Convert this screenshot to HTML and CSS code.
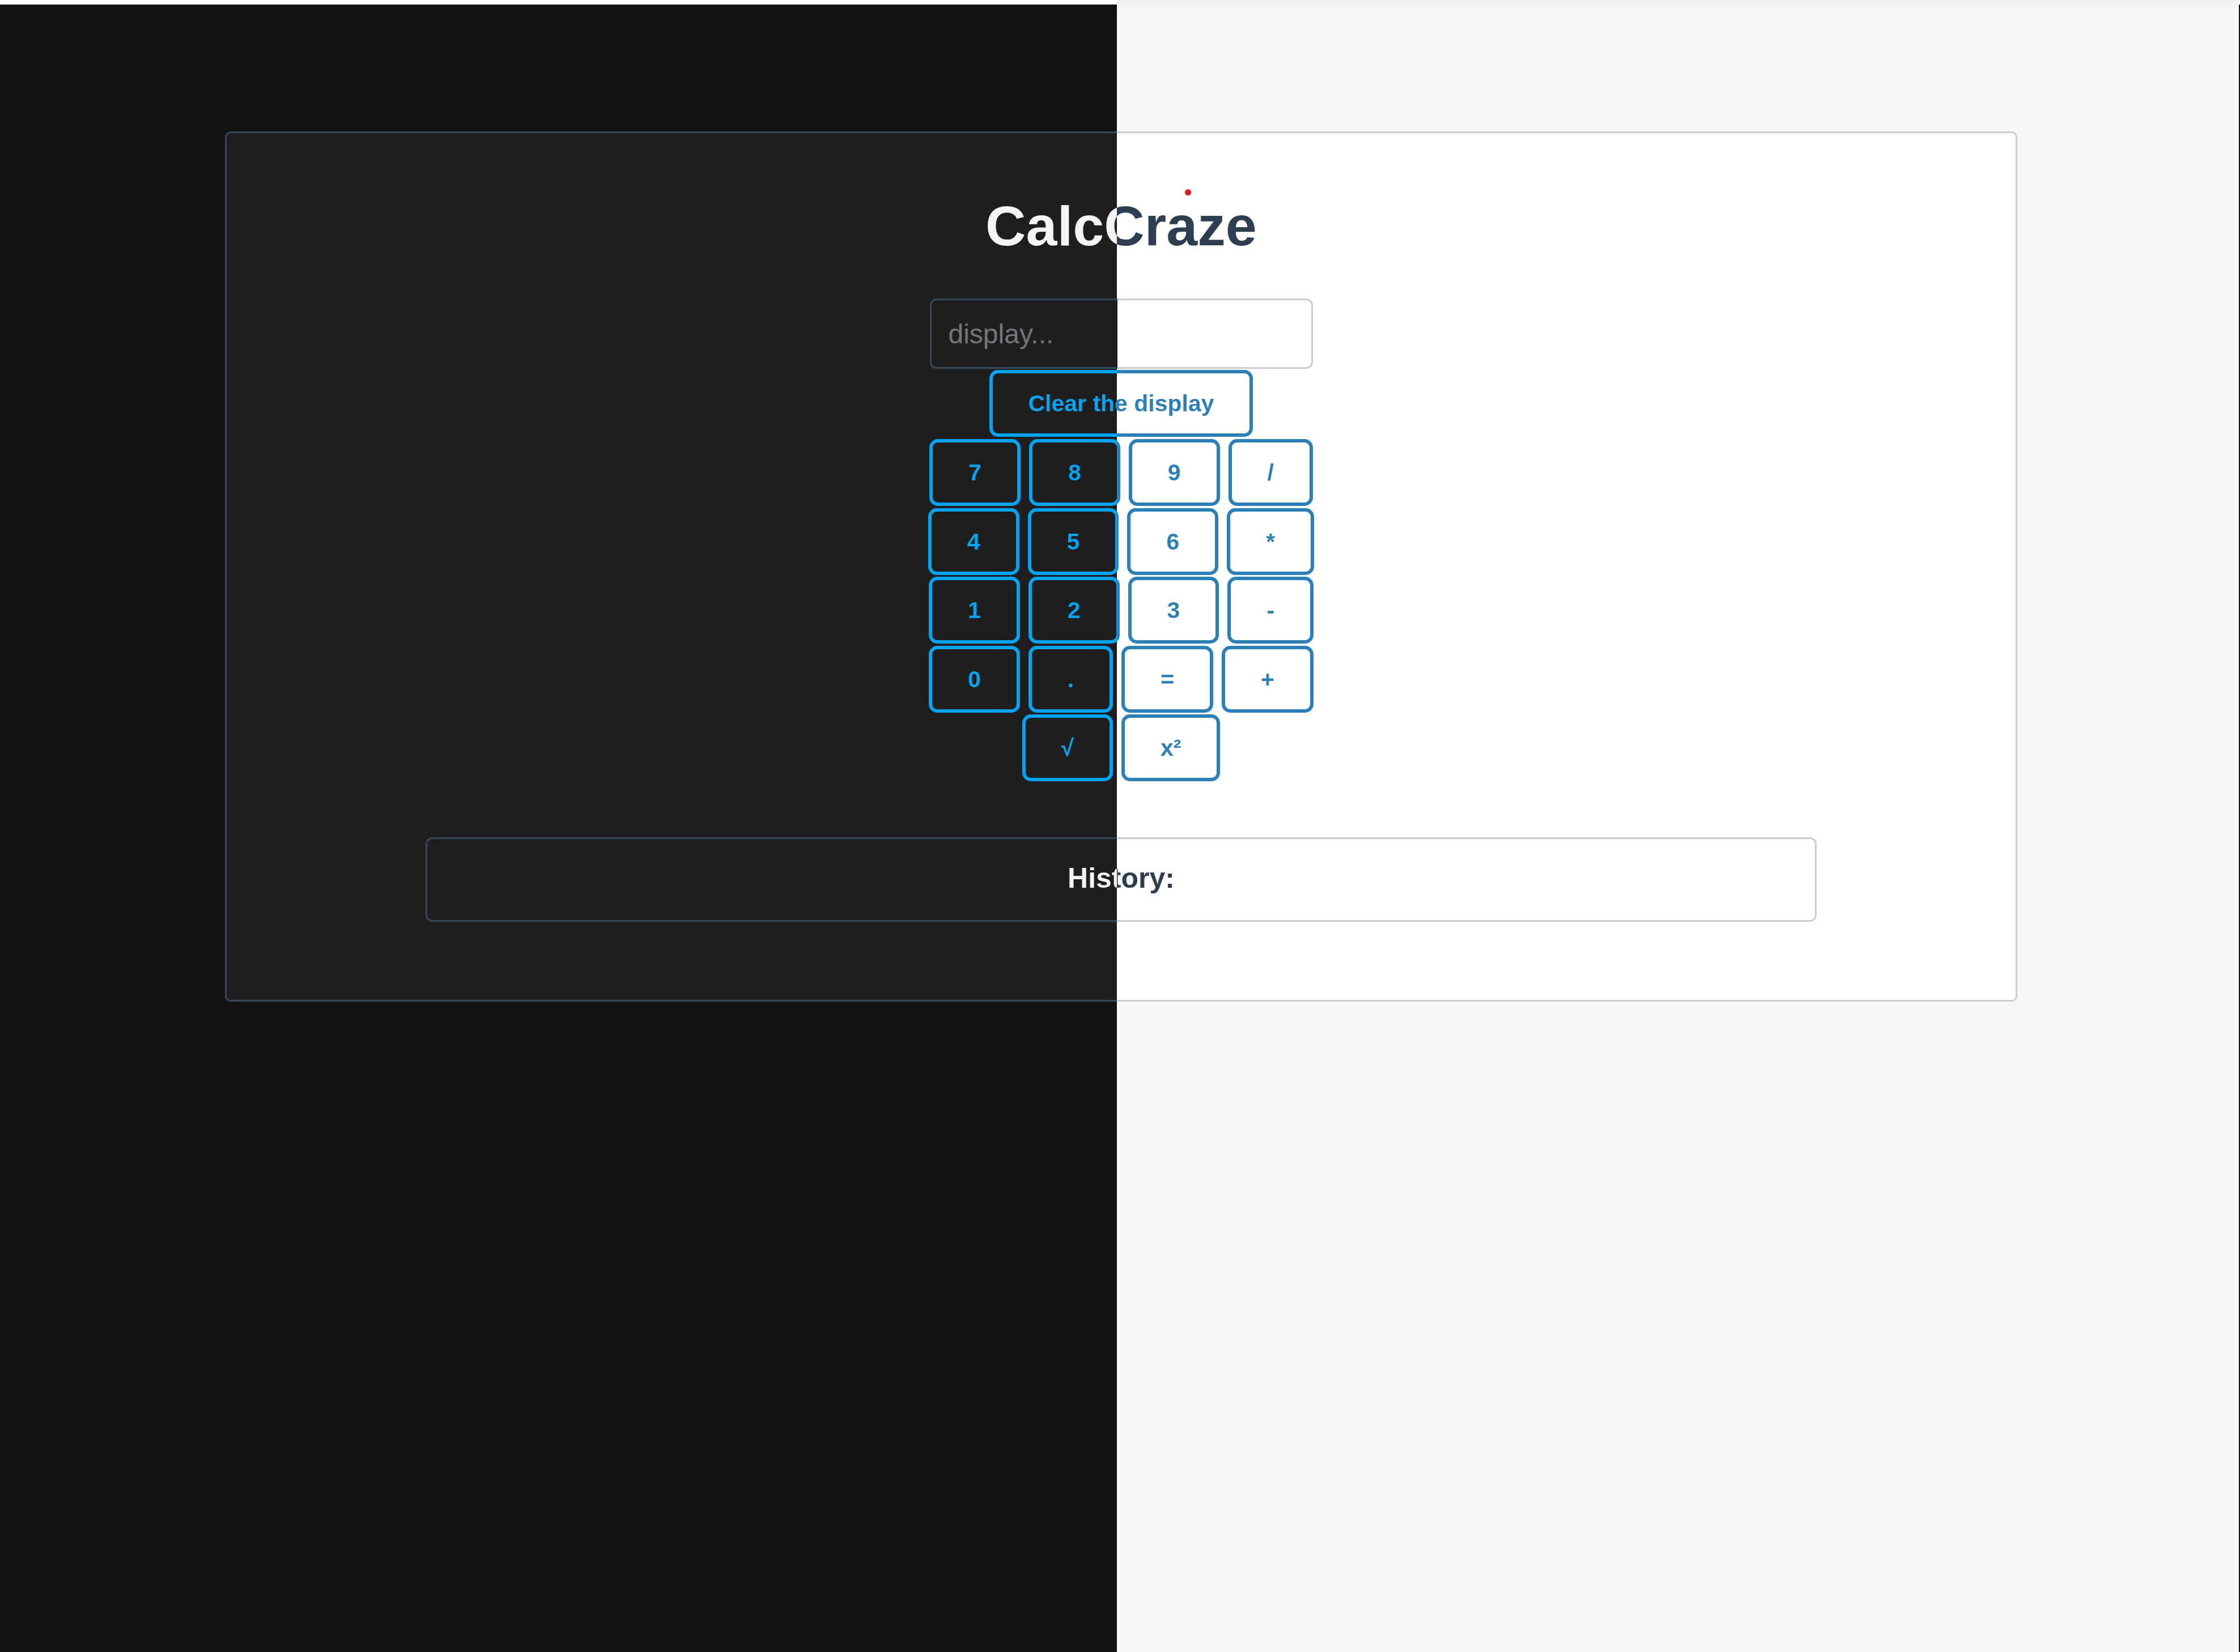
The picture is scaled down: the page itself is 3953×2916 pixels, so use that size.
FILE: index.html
```html
<!DOCTYPE html>
<html lang="en">
<head>
<meta charset="utf-8">
<title>CalcCraze</title>
<link rel="stylesheet" href="styles.css">
</head>
<body>
<div class="page">
  <main class="card">
    <span class="dot"></span>
    <h1 class="title"><span class="ink-title">CalcCraze</span></h1>
    <input class="display" type="text" placeholder="display...">
    <button class="btn btn-clear"><span class="ink-btn">Clear the display</span></button>
    <div class="keys">
      <div class="row">
        <button class="btn"><span class="ink-btn">7</span></button>
        <button class="btn"><span class="ink-btn">8</span></button>
        <button class="btn"><span class="ink-btn">9</span></button>
        <button class="btn"><span class="ink-btn">/</span></button>
      </div>
      <div class="row">
        <button class="btn"><span class="ink-btn">4</span></button>
        <button class="btn"><span class="ink-btn">5</span></button>
        <button class="btn"><span class="ink-btn">6</span></button>
        <button class="btn"><span class="ink-btn">*</span></button>
      </div>
      <div class="row">
        <button class="btn"><span class="ink-btn">1</span></button>
        <button class="btn"><span class="ink-btn">2</span></button>
        <button class="btn"><span class="ink-btn">3</span></button>
        <button class="btn"><span class="ink-btn">-</span></button>
      </div>
      <div class="row">
        <button class="btn"><span class="ink-btn">0</span></button>
        <button class="btn"><span class="ink-btn">.</span></button>
        <button class="btn"><span class="ink-btn">=</span></button>
        <button class="btn"><span class="ink-btn">+</span></button>
      </div>
      <div class="row">
        <button class="btn"><span class="ink-btn">√</span></button>
        <button class="btn"><span class="ink-btn">x²</span></button>
      </div>
    </div>
    <section class="history">
      <h3 class="history-title"><span class="ink-title">History:</span></h3>
    </section>
  </main>
</div>
</body>
</html>
```

FILE: styles.css
```css
html {
  background:
    linear-gradient(#121212, #121212) 3951px 8px / 2px 100% no-repeat fixed,
    linear-gradient(#121212, #121212) 0 8px / 1971px 100% no-repeat fixed,
    linear-gradient(#eeeeee, #f8f8f8 20px) 1971px 0 / 1980px 100% no-repeat fixed,
    #ffffff;
  min-height: 100%;
}

body {
  margin: 0;
  font-family: "Liberation Sans", Arial, sans-serif;
}

.page {
  padding-top: 232px;
}

.card {
  position: relative;
  box-sizing: border-box;
  width: 3163px;
  margin-left: 397px;
  padding: 106px 0 138px;
  border: 3px solid transparent;
  border-radius: 10px;
  background:
    linear-gradient(to right, #1e1e1e 1971px, #ffffff 1971px) fixed padding-box,
    linear-gradient(to right, #34495e 1971px, #cccccc 1971px) fixed border-box;
  display: flex;
  flex-direction: column;
  align-items: center;
}

.dot {
  position: absolute;
  left: 1691px;
  top: 99px;
  width: 11px;
  height: 11px;
  border-radius: 50%;
  background: #e31b1b;
}

.title {
  margin: 0;
  font-size: 99px;
  line-height: 115px;
  font-weight: 700;
}

.ink-title {
  background: linear-gradient(to right, #f4f4f4 1971px, #2c3e50 1971px) fixed;
  -webkit-background-clip: text;
  background-clip: text;
  color: transparent;
}

.display {
  box-sizing: border-box;
  width: 676px;
  height: 124px;
  margin: 71px 0 0;
  padding: 0 30px;
  border: 3px solid transparent;
  border-radius: 12px;
  background:
    linear-gradient(to right, #1e1e1e 1971px, #ffffff 1971px) fixed padding-box,
    linear-gradient(to right, #34495e 1971px, #cccccc 1971px) fixed border-box;
  font-family: "Liberation Sans", Arial, sans-serif;
  font-size: 48px;
  color: #dddddd;
  outline: none;
}

.display::placeholder {
  color: #767676;
  opacity: 1;
}

.btn {
  box-sizing: border-box;
  height: 118px;
  margin: 0;
  padding: 0 63px;
  border: 6px solid transparent;
  border-radius: 15px;
  background:
    linear-gradient(to right, #1e1e1e 1971px, #ffffff 1971px) fixed padding-box,
    linear-gradient(to right, #03a4f4 1971px, #2b80ba 1971px) fixed border-box;
  font-family: "Liberation Sans", Arial, sans-serif;
  font-size: 41px;
  font-weight: 700;
  line-height: 46px;
  cursor: pointer;
}

.ink-btn {
  background: linear-gradient(to right, #03a4f4 1971px, #2b80ba 1971px) fixed;
  -webkit-background-clip: text;
  background-clip: text;
  color: transparent;
}

.btn-clear {
  margin-top: 2px;
  padding: 0 62px;
}

.keys {
  margin-top: 4px;
  display: flex;
  flex-direction: column;
  gap: 3.5px;
}

.row {
  display: flex;
  justify-content: center;
  gap: 15px;
}

.history {
  box-sizing: border-box;
  width: 2455px;
  height: 149px;
  margin-top: 99px;
  padding-bottom: 6px;
  border: 3px solid transparent;
  border-radius: 12px;
  background:
    linear-gradient(to right, #1e1e1e 1971px, #ffffff 1971px) fixed padding-box,
    linear-gradient(to right, #34495e 1971px, #cccccc 1971px) fixed border-box;
  display: flex;
  align-items: center;
  justify-content: center;
}

.history-title {
  margin: 0;
  font-size: 50px;
  line-height: 58px;
  font-weight: 700;
}
```
